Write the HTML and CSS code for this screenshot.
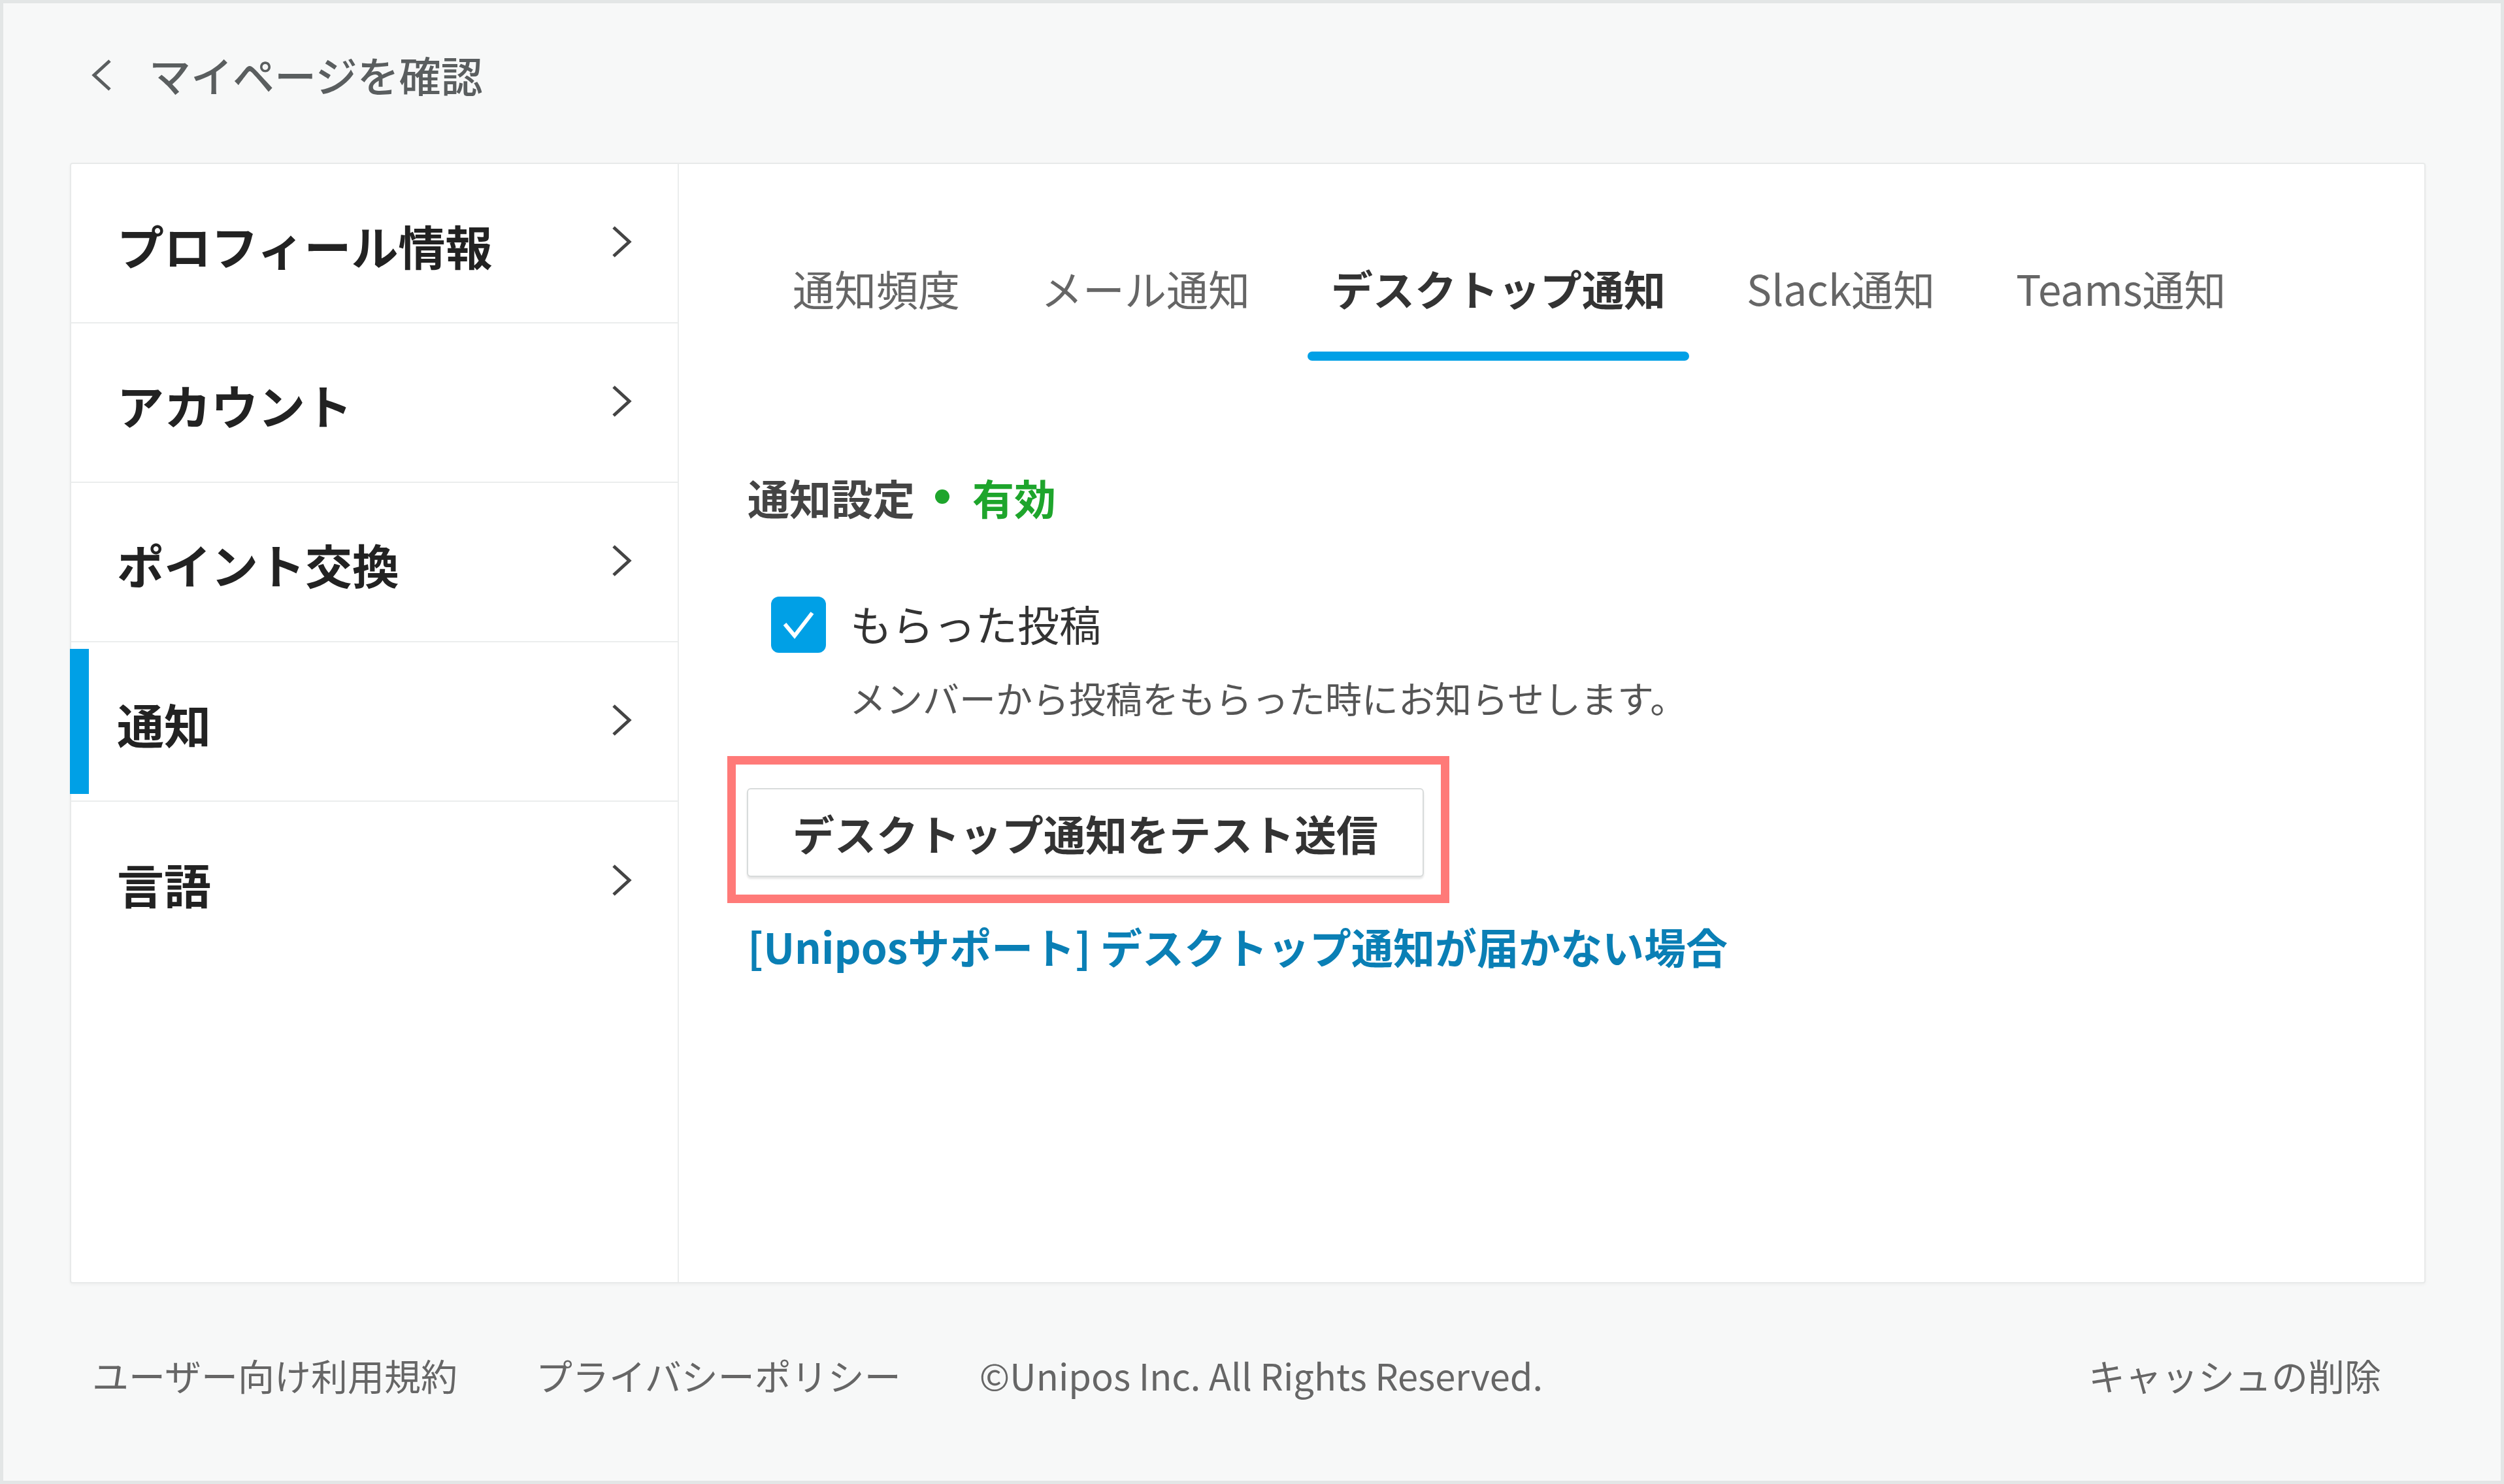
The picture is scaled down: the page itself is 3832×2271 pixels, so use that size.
FILE: index.html
```html
<!DOCTYPE html>
<html lang="ja">
<head>
    <meta charset="UTF-8">
    <meta name="viewport" content="width=device-width, initial-scale=1.0">
    <title>通知設定</title>
    <link rel="stylesheet" href="styles.css">
</head>
<body>
    <div class="page">
        <!-- Back link -->
        <a class="back-link" href="#">
            <svg class="back-icon" viewBox="0 0 36 52"><polyline points="31,4 7,26 31,48"/></svg>
            <span>マイページを確認</span>
        </a>

        <!-- Settings card -->
        <div class="settings-card">
            <ul class="side-menu">
                <li class="side-item">
                    <span>プロフィール情報</span>
                    <svg class="chevron" viewBox="0 0 32 52"><polyline points="4,4 28,26 4,48"/></svg>
                </li>
                <li class="side-item">
                    <span>アカウント</span>
                    <svg class="chevron" viewBox="0 0 32 52"><polyline points="4,4 28,26 4,48"/></svg>
                </li>
                <li class="side-item">
                    <span>ポイント交換</span>
                    <svg class="chevron" viewBox="0 0 32 52"><polyline points="4,4 28,26 4,48"/></svg>
                </li>
                <li class="side-item active">
                    <span>通知</span>
                    <svg class="chevron" viewBox="0 0 32 52"><polyline points="4,4 28,26 4,48"/></svg>
                </li>
                <li class="side-item">
                    <span>言語</span>
                    <svg class="chevron" viewBox="0 0 32 52"><polyline points="4,4 28,26 4,48"/></svg>
                </li>
            </ul>

            <div class="settings-main">
                <nav class="tabs">
                    <a class="tab" href="#">通知頻度</a>
                    <a class="tab" href="#">メール通知</a>
                    <a class="tab active" href="#">デスクトップ通知</a>
                    <a class="tab" href="#">Slack通知</a>
                    <a class="tab" href="#">Teams通知</a>
                </nav>

                <div class="tab-panel">
                    <div class="status">
                        <span>通知設定</span>
                        <span class="status-dot"></span>
                        <span class="status-on">有効</span>
                    </div>

                    <label class="check-row">
                        <span class="checkbox">
                            <svg viewBox="0 0 84 86"><polyline points="21,42 36,60 63,25"/></svg>
                        </span>
                        <span>もらった投稿</span>
                    </label>
                    <p class="check-desc">メンバーから投稿をもらった時にお知らせします。</p>

                    <div class="highlight">
                        <button class="test-button">デスクトップ通知をテスト送信</button>
                    </div>

                    <a class="help-link" href="#">[Uniposサポート] デスクトップ通知が届かない場合</a>
                </div>
            </div>
        </div>

        <!-- Footer -->
        <footer class="footer">
            <a href="#">ユーザー向け利用規約</a>
            <a href="#">プライバシーポリシー</a>
            <span>©Unipos Inc. All Rights Reserved.</span>
            <a class="footer-right" href="#">キャッシュの削除</a>
        </footer>
    </div>
</body>
</html>
```

FILE: styles.css
```css
:root {
    --bg-page: #f7f8f8;
    --frame: #e3e6e6;
    --line: #ebeded;
    --blue: #00a0e6;
    --link: #0a7fb5;
    --green: #1ea52c;
    --text-dark: #222;
    --text-main: #333;
    --text-sub: #555;
    --text-muted: #666;
    --highlight: #ff7a78;
}

html, body {
    margin: 0;
    padding: 0;
}

body {
    font-family: "Noto Sans CJK JP", "Noto Sans", sans-serif;
    color: var(--text-main);
}

a {
    color: inherit;
    text-decoration: none;
}

.page {
    box-sizing: border-box;
    height: 100vh;
    display: flex;
    flex-direction: column;
    padding: 0 115px 0 102px;
    border: 5px solid var(--frame);
    background: var(--bg-page);
}

/* Back link */
.back-link {
    display: flex;
    align-items: center;
    height: 216px;
    margin-bottom: 28px;
    padding-left: 30px;
    font-size: 64px;
    font-weight: 500;
    color: #5a5e5f;
}

.back-icon {
    width: 36px;
    height: 52px;
    margin: 4px 55px 0 0;
    fill: none;
    stroke: #5a5e5f;
    stroke-width: 5;
}

/* Card */
.settings-card {
    flex: 0 0 1715px;
    box-sizing: border-box;
    display: flex;
    background: #fff;
    border: 2px solid #e8eaea;
    border-radius: 4px;
    box-shadow: 0 2px 4px rgba(0, 0, 0, 0.04);
}

.side-menu {
    width: 928px;
    margin: 0;
    padding: 0;
    list-style: none;
    border-right: 2px solid var(--line);
}

.side-item {
    position: relative;
    box-sizing: border-box;
    height: 244px;
    display: flex;
    align-items: center;
    justify-content: space-between;
    padding: 4px 70px 0 70px;
    border-bottom: 2px solid var(--line);
    font-size: 72px;
    font-weight: 700;
    color: var(--text-dark);
}

.side-item:last-child {
    border-bottom: none;
}

.side-item.active::before {
    content: "";
    position: absolute;
    left: -2px;
    top: 10px;
    bottom: 10px;
    width: 29px;
    background: var(--blue);
}

.chevron {
    width: 32px;
    height: 52px;
    margin-top: -8px;
    fill: none;
    stroke: #444;
    stroke-width: 5;
}

/* Main area */
.settings-main {
    flex: 1;
    padding: 141px 0 0 105px;
}

.tabs {
    display: flex;
    gap: 52px;
    margin-left: 33px;
}

.tab {
    position: relative;
    padding: 0 36px 64px;
    font-size: 64px;
    line-height: 96px;
    color: var(--text-muted);
}

.tab.active {
    font-weight: 700;
    color: var(--text-main);
}

.tab.active::after {
    content: "";
    position: absolute;
    left: 0;
    right: 0;
    bottom: 0;
    height: 14px;
    border-radius: 7px;
    background: var(--blue);
}

.tab-panel {
    display: flex;
    flex-direction: column;
    align-items: flex-start;
}

.status {
    display: flex;
    align-items: center;
    margin-top: 160px;
    font-size: 64px;
    line-height: 96px;
    font-weight: 700;
    color: #444;
}

.status-dot {
    width: 22px;
    height: 22px;
    margin: 0 35px 0 31px;
    border-radius: 50%;
    background: var(--green);
}

.status-on {
    color: var(--green);
}

.check-row {
    display: flex;
    align-items: center;
    margin: 97px 0 0 36px;
    font-size: 64px;
    line-height: 96px;
    color: var(--text-main);
}

.checkbox {
    width: 84px;
    height: 86px;
    margin: 5px 37px 0 0;
    border-radius: 12px;
    background: var(--blue);
}

.checkbox svg {
    display: block;
    width: 84px;
    height: 86px;
    fill: none;
    stroke: #fff;
    stroke-width: 6;
}

.check-desc {
    margin: 24px 0 0 156px;
    font-size: 56px;
    line-height: 84px;
    color: var(--text-sub);
}

.highlight {
    margin: 48px 0 0 -31px;
    padding: 36px 26px 27px 17px;
    border: 13px solid var(--highlight);
}

.test-button {
    display: block;
    box-sizing: border-box;
    width: 1036px;
    height: 136px;
    padding: 0;
    border: 2px solid #d8dbdb;
    border-radius: 6px;
    background: #fff;
    box-shadow: 0 3px 3px rgba(0, 0, 0, 0.1);
    font-family: inherit;
    font-size: 64px;
    font-weight: 700;
    color: var(--text-main);
}

.help-link {
    margin-top: 17px;
    font-size: 64px;
    line-height: 96px;
    font-weight: 700;
    color: var(--link);
}

/* Footer */
.footer {
    flex: 1;
    display: flex;
    align-items: center;
    gap: 120px;
    padding: 0 68px 24px 34px;
    font-size: 56px;
    color: var(--text-muted);
}

.footer-right {
    margin-left: auto;
}
```
